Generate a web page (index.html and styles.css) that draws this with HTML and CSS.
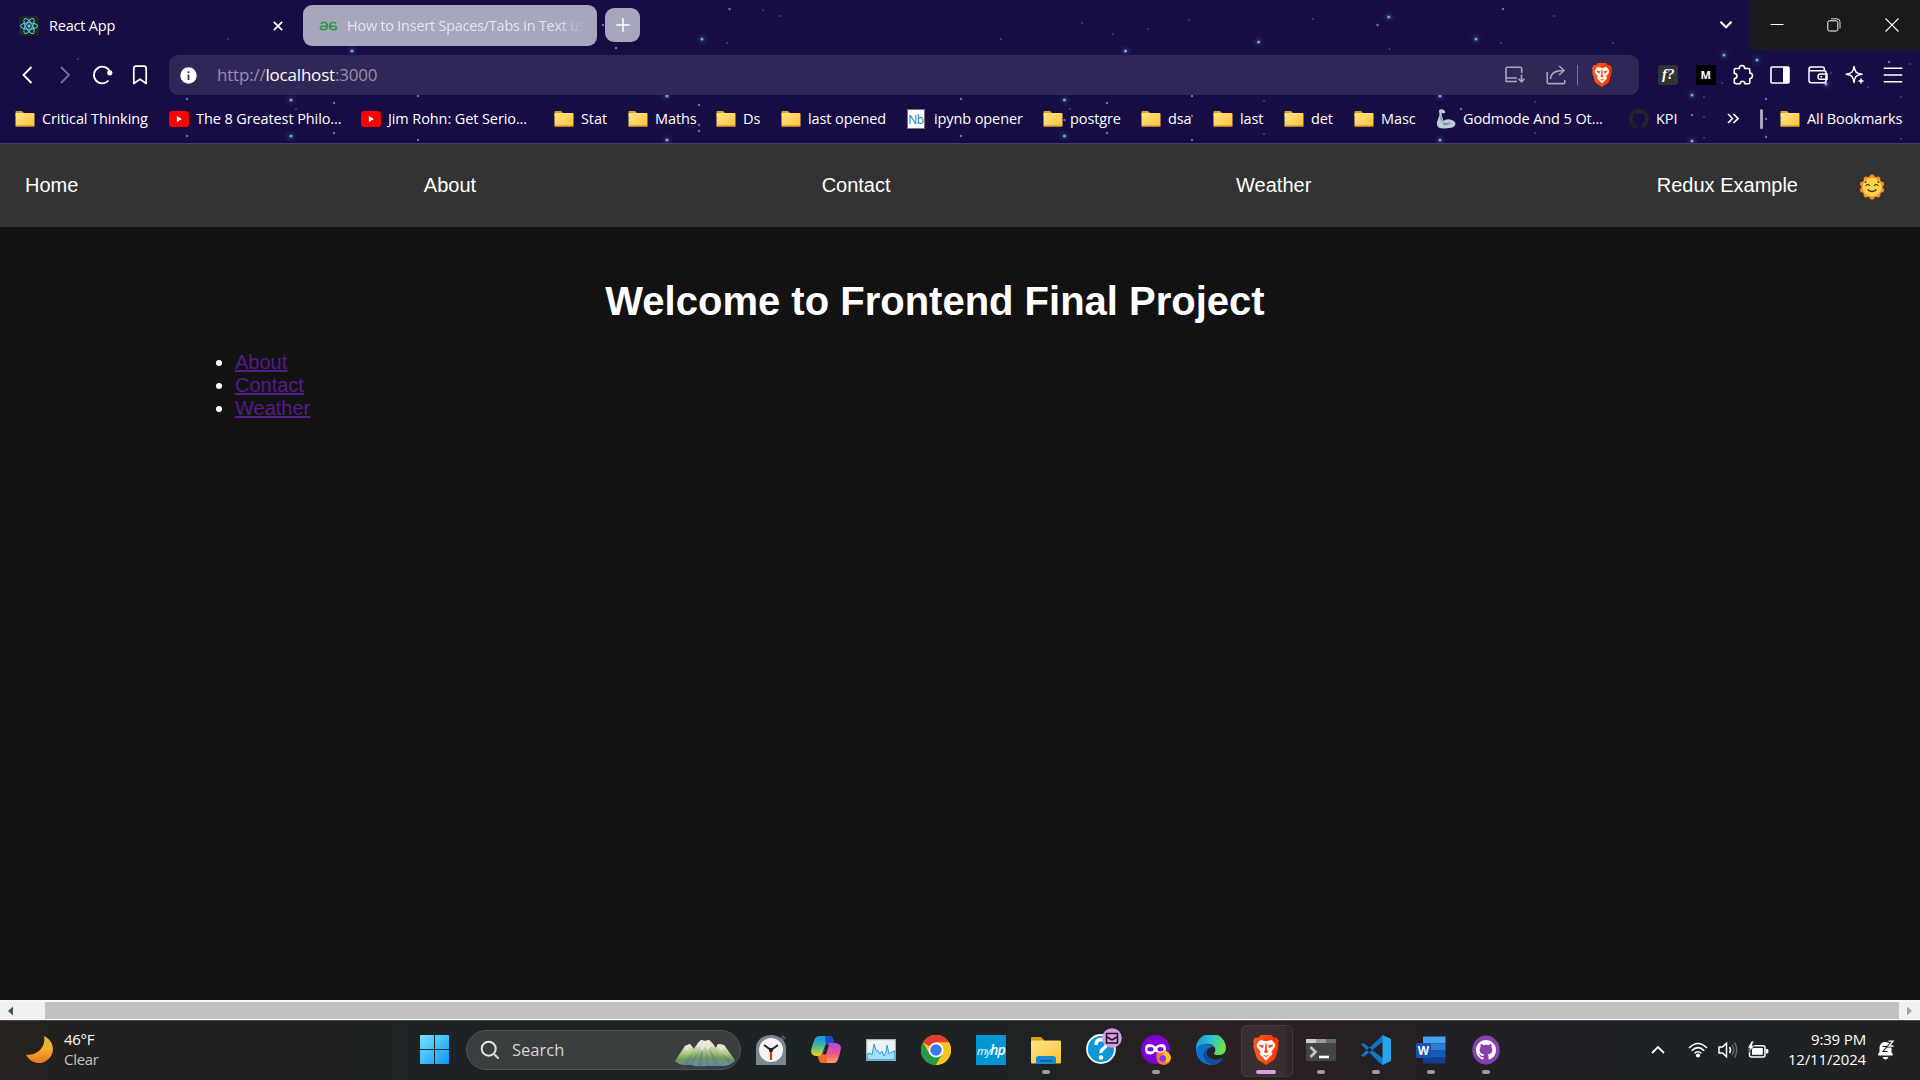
FILE: index.html
```html
<!DOCTYPE html>
<html lang="en">
<head>
<meta charset="utf-8">
<title>React App</title>
<link rel="stylesheet" href="styles.css">
</head>
<body>
<svg class="sprite" width="0" height="0">
  <defs>
    <linearGradient id="gFolder" x1="0" y1="0" x2="1" y2="1"><stop offset="0" stop-color="#ffe58c"/><stop offset="1" stop-color="#fbc234"/></linearGradient>
    <linearGradient id="gBrave" x1="0" y1="0" x2="1" y2="0"><stop offset="0" stop-color="#ff5a1f"/><stop offset="1" stop-color="#ff3000"/></linearGradient>
  </defs>
  <symbol id="folder" viewBox="0 0 20 18">
    <path d="M.5 2Q.5 1 1.500 1H7L9 3V6H.5Z" fill="#e0a21a"/>
    <rect x=".5" y="3" width="19" height="13.600" rx="1" fill="url(#gFolder)"/>
    <path d="M.5 16H19.500" stroke="#c98f1b" stroke-width="1"/>
  </symbol>
  <symbol id="youtube" viewBox="0 0 20 16">
    <rect x="0" y="0" width="20" height="16" rx="3.5" fill="#f00"/>
    <path d="M7.8 5V11L13 8Z" fill="#fff"/>
  </symbol>
  <symbol id="brave" viewBox="0 0 20 24">
    <path d="M6 0H14L16 2.2 18.2 2 20 5 19.3 7 19.8 9 17.3 18Q16.8 19.5 15.5 20.4L10 24 4.500 20.400Q3.200 19.500 2.700 18L.2 9 .7 7 0 5 1.800 2 4 2.200Z" fill="url(#gBrave)"/>
    <path d="M5.500 4L10 5 14.500 4 17.300 7.800 16.700 10 14.200 13.200 15 15.200 13.300 17 10 20.500 6.700 17 5 15.200 5.800 13.200 3.300 10 2.700 7.800Z" fill="#fff"/>
    <path d="M4.500 7.500L8.500 8.300 7.500 10.500 5.200 9.200ZM15.500 7.500L11.500 8.300 12.500 10.500 14.800 9.200ZM9.500 6.500H10.500L10.800 12 11.700 13.500 10 14.500 8.300 13.500 9.200 12ZM7 15.300L10 16.500 13 15.300 10 17.800Z" fill="#fb4a1a"/>
  </symbol>
  <symbol id="octocat" viewBox="0 0 16 16">
    <path d="M8 0C3.580 0 0 3.580 0 8c0 3.540 2.290 6.530 5.470 7.590.4.070.55-.17.55-.38 0-.19-.01-.82-.01-1.490-2.010.37-2.530-.49-2.690-.94-.09-.23-.48-.94-.82-1.130-.28-.15-.68-.52-.01-.53.63-.01 1.080.58 1.230.82.72 1.210 1.870.87 2.330.66.07-.52.28-.87.51-1.070-1.780-.2-3.640-.89-3.640-3.950 0-.87.31-1.590.82-2.150-.08-.2-.36-1.020.08-2.120 0 0 .67-.21 2.200.82.64-.18 1.320-.27 2-.27s1.360.09 2 .27c1.530-1.040 2.200-.82 2.200-.82.44 1.100.16 1.920.08 2.120.51.56.82 1.270.82 2.150 0 3.070-1.870 3.750-3.650 3.950.29.25.54.73.54 1.480 0 1.070-.01 1.930-.01 2.200 0 .21.15.46.55.38A8.010 8.010 0 0 0 16 8c0-4.420-3.580-8-8-8z" fill="currentColor"/>
  </symbol>
</svg>

<div class="screen">
<header class="browser">
  <svg class="stars" width="1920" height="143" id="stars"></svg>

  <div class="tabs">
    <div class="tab active">
      <svg width="20" height="20" viewBox="0 0 20 20"><rect width="20" height="20" rx="2.500" fill="#222526"/><g fill="none" stroke="#5cc6dc" stroke-width="1.100"><ellipse cx="10" cy="10" rx="8.500" ry="3.300"/><ellipse cx="10" cy="10" rx="8.500" ry="3.300" transform="rotate(60 10 10)"/><ellipse cx="10" cy="10" rx="8.500" ry="3.300" transform="rotate(120 10 10)"/></g><circle cx="10" cy="10" r="1.700" fill="#5cc6dc"/></svg>
      <span class="tab-title">React App</span>
      <svg class="tab-close" width="12" height="12" viewBox="0 0 12 12"><path d="M1.800 1.800L10.200 10.200M10.200 1.800L1.800 10.200" stroke="#fff" stroke-width="1.800"/></svg>
    </div>
    <div class="tab idle">
      <svg width="19" height="10" viewBox="0 0 19 12" preserveAspectRatio="none" fill="none" stroke="#2f9b4a" stroke-width="2"><path d="M9 6.300H1.200M2 3.500Q3 1.200 5.300 1.500 8.200 2 8.200 6T5 10.500Q2 10.800 1.300 7.500M10 6.300H17.800M17 3.500Q16 1.200 13.700 1.500 10.800 2 10.800 6T14 10.500Q17 10.800 17.700 7.500"/></svg>
      <span class="tab-title">How to Insert Spaces/Tabs in Text using</span>
    </div>
    <div class="new-tab"><svg width="14" height="14" viewBox="0 0 14 14"><path d="M7 .3V13.700M.3 7H13.700" stroke="#fff" stroke-width="1.500"/></svg></div>
    <svg class="tab-search" width="14" height="10" viewBox="0 0 14 10"><path d="M1.500 1.800L7 7.300 12.500 1.800" fill="none" stroke="#fff" stroke-width="2.200"/></svg>
    <div class="win-controls">
      <div><svg width="14" height="14" viewBox="0 0 14 14"><path d="M.5 6.500H13.500" stroke="#fff"/></svg></div>
      <div><svg width="14" height="14" viewBox="0 0 14 14" fill="none"><path d="M4 .8H10Q13 .8 13 3.800V10.500" stroke="#ddd"/><rect x=".8" y="2.800" width="10" height="10.200" rx="1.500" stroke="#fff"/></svg></div>
      <div><svg width="14" height="14" viewBox="0 0 14 14"><path d="M.5.5L13.500 13.500M13.500.5L.5 13.500" stroke="#fff" stroke-width="1.100"/></svg></div>
    </div>
  </div>

  <div class="toolbar">
    <div class="nav-icons">
      <svg width="38" height="24" viewBox="0 0 38 24"><path d="M23.500 4L15.500 12 23.500 20" fill="none" stroke="#fff" stroke-width="1.800"/></svg>
      <svg width="38" height="24" viewBox="0 0 38 24"><path d="M15 4L23 12 15 20" fill="none" stroke="#776f98" stroke-width="1.800"/></svg>
      <svg width="38" height="24" viewBox="0 0 38 24"><path d="M24.500 17.500A8.300 8.300 0 1 1 26 9" fill="none" stroke="#fff" stroke-width="1.800"/><circle cx="25.800" cy="9.800" r="2.600" fill="#fff"/></svg>
      <svg width="38" height="24" viewBox="0 0 38 24"><path d="M11.800 20.500V5.300Q11.800 3.200 14 3.200H22Q24.200 3.200 24.200 5.300V20.500L18 16.200Z" fill="none" stroke="#fff" stroke-width="1.700" stroke-linejoin="round"/></svg>
    </div>
    <div class="address">
      <svg width="17" height="17" viewBox="0 0 17 17"><circle cx="8.500" cy="8.500" r="8.200" fill="#fff"/><path d="M8.500 7.500V13M8.500 4.200V6" stroke="#312757" stroke-width="1.700"/></svg>
      <span class="url">http://<b>localhost</b>:3000</span>
      <div class="address-icons">
        <svg width="22" height="18" viewBox="0 0 22 18" fill="none" stroke="#aaa5bd" stroke-width="1.600"><path d="M13 15.500H1.500M2 12V2.500Q2 1.300 3.200 1.300H16.500Q17.700 1.300 17.700 2.500V7M2 12H13M2 12V15.500M17.500 8.500V15.500M14.500 12.800L17.500 15.800 20.500 12.800"/></svg>
        <svg width="20" height="20" viewBox="0 0 20 20" fill="none" stroke="#aaa5bd" stroke-width="1.600"><path d="M1.200 7V17.300Q1.200 18.600 2.500 18.600H17.500Q18.800 18.600 18.800 17.300V15M4.500 14Q5 5.500 17 5.500M13.200 1L18 5.500 13.200 10"/></svg>
        <i class="address-sep"></i>
        <svg width="20" height="24"><use href="#brave"/></svg>
      </div>
    </div>
    <div class="extensions">
      <div><span class="ext ext-f">f?</span></div>
      <div><span class="ext ext-m">M</span></div>
      <svg width="22" height="22" viewBox="0 0 22 22"><path d="M3.500 4.500H7.300Q7.300 1.500 10 1.500T12.700 4.500H16.500Q17.800 4.500 17.800 5.800V9Q20.500 9.300 20.500 11.800T17.800 14.700V18.300Q17.800 19.700 16.500 19.700H13Q12.500 17.300 10.500 17.300T8 19.700H4.500Q2.300 19.700 2.300 18.300V14.800Q5 14.300 5 12T2.300 9.300V5.800Q2.300 4.500 3.500 4.500Z" fill="none" stroke="#fff" stroke-width="1.600"/></svg>
      <svg width="20" height="18" viewBox="0 0 20 18"><rect x="1" y="1" width="18" height="16" rx="1" fill="none" stroke="#fff" stroke-width="1.600"/><path d="M13 1H19V17H13Z" fill="#fff"/></svg>
      <svg width="20" height="18" viewBox="0 0 20 18" fill="none" stroke="#fff" stroke-width="1.500"><path d="M1 3.500V14.500Q1 16.700 3.200 16.700H16Q18 16.700 18 14.700V6.500Q18 4.800 16 4.800H3Q1 4.800 1 3T3 1H14.500Q16.300 1 16.300 2.800V4.500M19 8H12.500Q10 8 10 10.700T12.500 13.300H19ZM12.500 10.700H14"/></svg>
      <svg width="20" height="20" viewBox="0 0 20 20" fill="none" stroke="#fff" stroke-width="1.500"><path d="M9 1.500Q9.800 5.500 11 7T17 9.300Q12.500 10 11 11.500T9 17.500Q8.300 13 7 11.500T1.200 9.300Q5.500 8.500 7 7T9 1.500Z" stroke-linejoin="round"/><path d="M16 12.500L17 15 19.500 16 17 17 16 19.500 15 17 12.500 16 15 15Z" fill="#fff" stroke="none"/></svg>
      <svg width="20" height="16" viewBox="0 0 20 16"><path d="M.7 1.200H19.300M.7 8H19.300M.7 14.800H19.300" stroke="#fff" stroke-width="1.500"/></svg>
    </div>
  </div>

  <div class="bookmarks">
    <div><svg width="20" height="18"><use href="#folder"/></svg><span>Critical Thinking</span></div>
    <div><svg width="20" height="16"><use href="#youtube"/></svg><span>The 8 Greatest Philo...</span></div>
    <div><svg width="20" height="16"><use href="#youtube"/></svg><span>Jim Rohn: Get Serio...</span></div>
    <div><svg width="20" height="18"><use href="#folder"/></svg><span>Stat</span></div>
    <div><svg width="20" height="18"><use href="#folder"/></svg><span>Maths</span></div>
    <div><svg width="20" height="18"><use href="#folder"/></svg><span>Ds</span></div>
    <div><svg width="20" height="18"><use href="#folder"/></svg><span>last opened</span></div>
    <div><span class="nb">Nb</span><span>ipynb opener</span></div>
    <div><svg width="20" height="18"><use href="#folder"/></svg><span>postgre</span></div>
    <div><svg width="20" height="18"><use href="#folder"/></svg><span>dsa</span></div>
    <div><svg width="20" height="18"><use href="#folder"/></svg><span>last</span></div>
    <div><svg width="20" height="18"><use href="#folder"/></svg><span>det</span></div>
    <div><svg width="20" height="18"><use href="#folder"/></svg><span>Masc</span></div>
    <div><svg width="20" height="20" viewBox="0 0 20 20"><path d="M3 1Q6-.5 8.500 1.500L9.500 3.500 7.500 4.500 5.500 3.800 6 7 7.500 12Q10 9.500 14 10.500 19.500 11.500 19.500 15 19 18.500 14 19 6 20 2.500 18.500.500 17 1 13L3.500 6Z" fill="#bccbd6"/><path d="M5.500 3.800Q5 8 6 12L8 16Q5 13 4 9ZM8 13Q11 15 15 13Q12 17 7 16Z" fill="#7d91a5"/></svg><span>Godmode And 5 Ot...</span></div>
    <div><svg class="gh" width="20" height="20"><use href="#octocat"/></svg><span>KPI</span></div>
    <div><svg width="12" height="11" viewBox="0 0 12 11"><path d="M1 1L5.500 5.500 1 10M6.500 1L11 5.500 6.500 10" fill="none" stroke="#fff" stroke-width="1.600"/></svg></div>
    <div><i class="bm-sep"></i></div>
    <div><svg width="20" height="18"><use href="#folder"/></svg><span>All Bookmarks</span></div>
  </div>
</header>

<nav class="site-nav">
  <div class="links"><a>Home</a><a>About</a><a>Contact</a><a>Weather</a><a>Redux Example</a></div>
  <svg width="26" height="26" viewBox="0 0 26 26"><g fill="#fb8a2c"><circle cx="13" cy="13" r="10.700"/><circle cx="13" cy="3" r="2.500"/><circle cx="18.900" cy="4.900" r="2.500"/><circle cx="22.500" cy="9.900" r="2.500"/><circle cx="22.500" cy="16.100" r="2.500"/><circle cx="18.900" cy="21.100" r="2.500"/><circle cx="13" cy="23" r="2.500"/><circle cx="7.100" cy="21.100" r="2.500"/><circle cx="3.500" cy="16.100" r="2.500"/><circle cx="3.500" cy="9.900" r="2.500"/><circle cx="7.100" cy="4.900" r="2.500"/></g><circle cx="13" cy="13" r="9.600" fill="#ffd545"/><path d="M6.700 11.800Q8.700 8.800 10.700 11.800M15.300 11.800Q17.300 8.800 19.300 11.800M8.500 15.500Q13 19.500 17.500 15.500M5.800 8.700L7.500 7.200M18.500 7.200L20.200 8.700" fill="none" stroke="#4a3040" stroke-width="1.200"/></svg>
</nav>

<main class="page">
  <h1>Welcome to Frontend Final Project</h1>
  <ul><li><a href="#">About</a></li><li><a href="#">Contact</a></li><li><a href="#">Weather</a></li></ul>
</main>

<div class="scrollbar">
  <svg width="45" height="18" viewBox="0 0 45 18"><path d="M13 4.500V13.500L8 9Z" fill="#505050"/></svg>
  <div class="thumb"></div>
  <svg width="21" height="18" viewBox="0 0 21 18"><path d="M8 4.500V13.500L13 9Z" fill="#a3a3a3"/></svg>
</div>

<footer class="taskbar">
  <div class="weather">
    <svg width="28" height="28" viewBox="0 0 28 28"><defs><linearGradient id="gMoon" x1="0" y1="0" x2="0" y2="1"><stop offset="0" stop-color="#d8b047"/><stop offset=".45" stop-color="#f3b12e"/><stop offset="1" stop-color="#ee7320"/></linearGradient></defs><path d="M18 0A14 14 0 1 1 0 18.500 15.500 15.500 0 0 0 18 0Z" fill="url(#gMoon)"/></svg>
    <div><p>46°F</p><p class="dim">Clear</p></div>
  </div>
  <svg class="start" width="29" height="29" viewBox="0 0 29 29"><defs><linearGradient id="gWin" x1="0" y1="0" x2="1" y2="1"><stop offset="0" stop-color="#7adcff"/><stop offset=".5" stop-color="#3fc0fb"/><stop offset="1" stop-color="#0a96fb"/></linearGradient></defs><path d="M1 0H14V14H0V1Q0 0 1 0ZM15 0H28Q29 0 29 1V14H15ZM0 15H14V29H1Q0 29 0 28ZM15 15H29V28Q29 29 28 29H15Z" fill="url(#gWin)"/></svg>
  <div class="search">
    <svg width="20" height="20" viewBox="0 0 20 20"><circle cx="8.700" cy="8.700" r="7" fill="none" stroke="#e4e4e4" stroke-width="2"/><path d="M13.500 13.500L18 18" stroke="#ccc" stroke-width="2.400" stroke-linecap="round"/></svg>
    <span>Search</span>
    <svg class="hills" width="60" height="28" viewBox="0 0 60 28"><defs><linearGradient id="gHill" x1="0" y1="0" x2="0" y2="1"><stop offset="0" stop-color="#e9e6dc"/><stop offset=".4" stop-color="#b5cc8e"/><stop offset=".7" stop-color="#6f9c4d"/><stop offset="1" stop-color="#658cb0"/></linearGradient></defs><path d="M0 22L10 7 15 5 22 14V25Q10 27 4 25ZM38 14L43 5 49 6 60 21Q58 25 50 27H38Z" fill="url(#gHill)"/><path d="M8 24L23 4 26 1 30 2 34 1 38 5 52 24Q40 28 20 27Z" fill="url(#gHill)"/><path d="M28 7L22 27H27ZM34 9L40 27H45ZM17 16L8 25 14 26ZM46 14L54 25 57 22ZM24 12L14 26H18ZM31 12L31 27H35Z" fill="#587aa0" opacity=".6"/><path d="M23 4L26 1 30 2 34 1 38 5 40 9 36 7 33 11 30 7 27 12 25 7 21 10Z" fill="#eee5e2"/><path d="M10 7L15 5 18 9 14 9 12 12 10 9 7 12ZM43 5L49 6 53 12 49 9 46 12 44 8 41 10Z" fill="#dfe6d0"/></svg>
  </div>
  <div class="apps">
    <div><svg width="30" height="30" viewBox="0 0 30 30"><path d="M24 3L27 0 30 3 27 6Z" fill="#4e4f52"/><path d="M0 30V13A15 13 0 0 1 30 13V30Z" fill="#7b8793"/><circle cx="15" cy="15" r="12" fill="#f4f4f4"/><path d="M8 10L15 15 22 10" fill="none" stroke="#222" stroke-width="2"/><path d="M15 15V25" stroke="#d83b01" stroke-width="2.200"/><circle cx="15" cy="15" r="2.200" fill="#222"/></svg></div>
    <div><svg width="30" height="28" viewBox="0 0 30 28"><defs><linearGradient id="gC1" x1="0" y1="0" x2="0" y2="1"><stop offset="0" stop-color="#1696e8"/><stop offset=".45" stop-color="#38b8a0"/><stop offset="1" stop-color="#fbd40c"/></linearGradient><linearGradient id="gC2" x1="0" y1="0" x2="0" y2="1"><stop offset="0" stop-color="#a94be8"/><stop offset=".5" stop-color="#ee4f91"/><stop offset="1" stop-color="#ffa052"/></linearGradient></defs><path d="M8 0H19Q21 0 22 3L23 7H17Q15 7 14 10L11 18Q10 21 6 20Q0 20 0 15Q1 9 3.500 3.500 5 0 8 0Z" fill="url(#gC1)"/><path d="M14 0H18.500Q21 0 22 3.500L23 7H17Q15.500 7 15 8.500Z" fill="#1748cf"/><path d="M23 27H11Q9 27 8 24L7 20Q11 20 12.500 16L16 8.500Q17 6 22 7H25Q30 8 30 12 29 18 27 23 26 27 23 27Z" fill="url(#gC2)"/><path d="M16 27H11Q9 27 8 23.500L7 20H12.500Q14 20 15 17Z" fill="#f4692a"/><path d="M15.500 8.500H18L15 18.500H12Z" fill="#1d2223"/></svg></div>
    <div><svg width="30" height="22" viewBox="0 0 30 22"><rect width="30" height="22" fill="#a9b5bd"/><rect x="1.200" y="1.200" width="27.600" height="19.600" fill="#eef3f6"/><path d="M1.200 15L4 14 6 16 8 5 10 11 12 12 14 15 16 12 18 17 20 13 21 6 23 15 26 13 28.800 12V20.800H1.200Z" fill="#a5dcf8" stroke="#2b9ddb"/></svg></div>
    <div><svg width="30" height="30" viewBox="0 0 30 30"><circle cx="15" cy="15" r="15" fill="#fcc31e"/><path d="M15 15L2 7.500A15 15 0 0 1 28 7.500H15Z" fill="#e33b2e"/><path d="M2 7.500A15 15 0 0 0 15 30L21.500 18.700 15 15 8.500 18.700Z" fill="#249a49"/><path d="M15 7.500H28A15 15 0 0 1 15 30L21.500 18.700Z" fill="#fcc31e"/><circle cx="15" cy="15" r="7.500" fill="#fff"/><circle cx="15" cy="15" r="5.800" fill="#3b78e7"/></svg></div>
    <div><span class="myhp">my<b>hp</b></span></div>
    <div class="open"><svg width="30" height="28" viewBox="0 0 30 28"><path d="M0 2Q0 1 1 1H10L13 4V9H0Z" fill="#dc9b0b"/><rect y="4.500" width="30" height="23" rx="1" fill="url(#gFolder)"/><path d="M5 28V23Q5 20 8 20H22Q25 20 25 23V28Z" fill="#1789d3"/><rect x="9" y="24" width="12" height="1.500" fill="#0b5a9e"/></svg></div>
    <div><svg width="38" height="36" viewBox="0 0 38 36"><circle cx="16" cy="21" r="14" fill="#0f96d6" stroke="#f0f8fb" stroke-width="1.800"/><path d="M11 17Q11 11.500 16 11.500T21.500 16Q21.500 18.500 18.500 20.500T16 25" fill="none" stroke="#fff" stroke-width="3.400"/><circle cx="16" cy="29.500" r="2.300" fill="#fff"/><circle cx="27" cy="10" r="9.800" fill="#d99de5"/><g fill="none" stroke="#1b1220" stroke-width="1.500"><rect x="21.500" y="5.500" width="11" height="9.500"/><path d="M22 9L27 12 32 9"/></g></svg></div>
    <div class="open"><svg width="30" height="30" viewBox="0 0 30 30"><ellipse cx="14.500" cy="14.500" rx="14.500" ry="14.500" fill="#8000d7"/><path d="M4 14Q4 9 8.500 9 12 9 14.500 11.500 17 9 20.500 9 25 9 25 14T20 19.500Q17 19.500 14.500 16.500 12 19.500 9 19.500 4 19.500 4 14Z" fill="#fff"/><ellipse cx="9.500" cy="14.200" rx="3" ry="2.200" fill="#8000d7"/><ellipse cx="19.500" cy="14.200" rx="3" ry="2.200" fill="#8000d7"/><path d="M16 17Q22 19 24 15 30 18 30 23.500 29 30 22.500 30 16 29 15.500 23 15 20 16 17Z" fill="#ff7139"/><path d="M24 15Q29 18 30 23 28 28 24 27 27 23 22 20Z" fill="#ffc12e"/><circle cx="21.800" cy="23.500" r="3.200" fill="#7542e5"/></svg></div>
    <div><svg width="30" height="30" viewBox="0 0 30 30"><defs><linearGradient id="gE" x1="0" y1="0" x2="1" y2=".3"><stop offset="0" stop-color="#1b8de0"/><stop offset=".55" stop-color="#2bc3d2"/><stop offset="1" stop-color="#6be04a"/></linearGradient></defs><path d="M0 14A15 15 0 0 1 30 13Q30 19.500 23 20 18 20 18 18.500 20 16 19 13 16 7.500 8 9 1 11 0 16Z" fill="url(#gE)"/><path d="M0 15Q2 9 9.500 9 15 9 17.500 12 12 11.500 10.500 17 10 25 20 29 17 30 15 30A15 15 0 0 1 0 15Z" fill="#0c70cf"/><path d="M12 13Q9 17 12 21.500 18 27 27.500 22.500 24 30 16 30 8 27 7.500 20 8 14.500 12 13Z" fill="#124c98"/></svg></div>
    <div class="current"><svg width="26" height="30" viewBox="0 0 20 24" preserveAspectRatio="none"><use href="#brave" width="20" height="24"/></svg></div>
    <div class="open"><svg width="30" height="22" viewBox="0 0 30 22"><rect width="30" height="22" rx="1" fill="#434547"/><path d="M0 0H10V4H0Z" fill="#ccc"/><path d="M10 0H20V4H10Z" fill="#999"/><path d="M20 0H30V4H20Z" fill="#6c6c6c"/><path d="M4.500 8L9.500 13 4.500 18" fill="none" stroke="#c9c9c9" stroke-width="2.600"/><path d="M13 18H23" stroke="#fff" stroke-width="2.600"/></svg></div>
    <div class="open"><svg width="30" height="30" viewBox="0 0 30 30"><path d="M0 9.500L2.500 8 22 23.500V30L20 29ZM0 20.500L2.500 22 22 6.500V0Z" fill="#0d78c4"/><path d="M21.500 0L30 4V26L21.500 30Z" fill="#2aa3ee"/></svg></div>
    <div class="open"><svg width="30" height="28" viewBox="0 0 30 28"><path d="M7 1Q7 .5 8 .5H29.500V7.500H7Z" fill="#41a5ee"/><path d="M7 7.500H29.500V14.500H7Z" fill="#2b7cd3"/><path d="M7 14.500H29.500V21H7Z" fill="#185abd"/><path d="M7 21H29.500V27.500H7Z" fill="#103f91"/><rect y="7" width="15" height="15" rx="1" fill="#1a50b0"/><text x="7.500" y="18.800" class="word-w">W</text></svg></div>
    <div class="open"><svg width="28" height="30" viewBox="0 0 28 30"><ellipse cx="14" cy="15" rx="13.700" ry="14.500" fill="#8a3fae"/><g color="#fff" transform="translate(4 5)"><use href="#octocat" width="20" height="20"/></g></svg></div>
  </div>
  <div class="tray">
    <svg width="14" height="10" viewBox="0 0 14 10"><path d="M1 8L7 2 13 8" fill="none" stroke="#fff" stroke-width="1.800"/></svg>
    <svg class="wifi" width="20" height="16" viewBox="0 0 20 16" fill="none" stroke="#fff" stroke-width="1.500"><path d="M1 6Q10-3 19 6M3.700 8.700Q10 2.500 16.300 8.700M6.500 11.400Q10 8 13.500 11.400"/><circle cx="10" cy="13.500" r="1.300" fill="#fff"/></svg>
    <svg class="speaker" width="20" height="18" viewBox="0 0 20 18" fill="none" stroke="#fff" stroke-width="1.500"><path d="M1 6H4.500L8.500 2.200V15.800L4.500 12H1ZM11.500 6Q13.500 9 11.500 12"/><path d="M14 3.800Q17.500 9 14 14.200M16.500 1.500Q21 9 16.500 16.500" stroke="#666a6e"/></svg>
    <svg class="battery" width="21" height="18" viewBox="0 0 21 18"><rect x="1.500" y="4.700" width="15.500" height="11.300" rx="2" fill="none" stroke="#fff" stroke-width="1.500"/><rect x="4" y="7" width="10.800" height="6.800" fill="#fff"/><path d="M18 8H19.300Q20.500 8 20.500 10.300T19.300 12.500H18Z" fill="#fff"/><path d="M3.500 0L-.5 7H2L.8 11.500 6.500 4.700H4L6 0Z" fill="#fff" stroke="#1f2226" stroke-width=".7"/></svg>
    <div class="clock"><p>9:39 PM</p><p>12/11/2024</p></div>
    <svg class="bell" width="18" height="20" viewBox="0 0 18 20"><path d="M1 14.500L2.500 12V7.500Q3 2 8.500 2 14.500 2.500 14.500 8V12L16 14.500Q16 15.500 15 15.500H2Q1 15.500 1 14.500ZM5.500 17H11.500Q10.500 19.500 8.500 19.500T5.500 17Z" fill="#fff"/><path d="M11.500 1.200H16L12 6H16.500" fill="none" stroke="#1f2223" stroke-width="3"/><path d="M11.500 1.200H16L12 6H16.500" fill="none" stroke="#fff" stroke-width="1.300"/><path d="M5.500 6.500H10L6 11.500H10.500" fill="none" stroke="#1f2223" stroke-width="1.200"/></svg>
  </div>
</footer>
</div>
<script src="stars.js"></script>
</body>
</html>
```
FILE: styles.css
```css
* { box-sizing: border-box; }
body { margin: 0; background: #121212; font-family: "Open Sans", "Noto Sans", sans-serif; color: #fff; overflow: hidden; }
svg { display: block; flex: none; }
p { margin: 0; }
.sprite { position: absolute; }
.screen { width: 1920px; height: 1080px; display: flex; flex-direction: column; }

.browser { position: relative; height: 144px; background: #170c44; border-bottom: 1px solid #443b78; }
.stars { position: absolute; left: 0; top: 0; }
.tabs, .toolbar, .bookmarks { position: relative; display: flex; align-items: center; }
.tabs { height: 50px; align-items: flex-start; font-size: 14.5px; letter-spacing: -.2px; }
.tab { display: flex; align-items: center; height: 41px; margin-top: 5px; }
.active { width: 303px; padding: 0 19px 0 19px; }
.active .tab-title { flex: 1; margin-left: 10px; }
.idle { width: 294px; padding: 0 11px 0 16px; background: #a6a7bd; border-radius: 9px; color: #e6e6ee; }
.idle .tab-title { margin-left: 9px; letter-spacing: -.25px; white-space: nowrap; overflow: hidden; -webkit-mask-image: linear-gradient(90deg, #000 88%, transparent); mask-image: linear-gradient(90deg, #000 88%, transparent); }
.new-tab { width: 35px; height: 34px; margin: 8px 0 0 8px; border-radius: 9px; background: #a6a7bd; display: grid; place-items: center; }
.tab-search { margin: 20px 16px 0 auto; }
.win-controls { display: flex; gap: 1px; height: 50px; }
.win-controls div { width: 56.5px; background: #1a191b; display: grid; place-items: center; }

.toolbar { height: 50px; }
.nav-icons { display: flex; width: 169px; padding-left: 8px; }
.address { width: 1470px; height: 40px; padding: 0 27px 0 11px; border-radius: 9px; background: #312757; display: flex; align-items: center; }
.url { margin: -2px 0 0 20px; font-size: 17px; letter-spacing: -.2px; color: #958fad; }
.url b { font-weight: 400; color: #fff; }
.address-icons { display: flex; align-items: center; margin-left: auto; }
.address-icons svg:nth-child(2) { margin-left: 20px; }
.address-sep { width: 1px; height: 20px; margin: 0 14px 0 11px; background: #7b7498; }
.extensions { display: grid; grid-template-columns: repeat(7, 37.4px); justify-items: center; align-items: center; margin-left: 10.500px; }
.ext { display: block; width: 20px; height: 20px; line-height: 20px; text-align: center; font-weight: 700; }
.ext-f { background: #333; border-radius: 3px; font: italic 700 15px/19px "Liberation Serif", serif; }
.ext-m { background: #000; font-size: 11px; }

.bookmarks { display: grid; height: 37px; padding-left: 15px; grid-template-columns: 154px 192px 193px 74px 88px 65px 126px 136px 98px 72px 71px 70px 82px 193px 97.500px 33.500px 20px 140px; font-size: 14.5px; letter-spacing: -.1px; white-space: nowrap; }
.bookmarks div { display: flex; align-items: center; gap: 7px; }
.nb { width: 18px; height: 20px; background: #fff; border: 1px solid #777; color: #2878ad; font-size: 12px; line-height: 19px; text-align: center; letter-spacing: -.5px; margin-right: 2px; }
.gh { color: #22262a; }
.bm-sep { width: 3px; height: 20px; background: #a6a7bd; border-radius: 2px; }

.site-nav { height: 83px; background: #333; display: flex; align-items: center; padding: 0 35px 0 25px; font: 20px/23px "Liberation Sans", Arial, sans-serif; }
.links { display: flex; justify-content: space-between; width: 1773px; }
.site-nav svg { margin: 3px 0 0 auto; }
.page { flex: 1; padding: 51px 195px 0; font: 20px/23px "Liberation Sans", Arial, sans-serif; }
.page h1 { margin: 0 0 27px; font-size: 40px; line-height: 46px; text-align: center; width: 1480px; }
.page ul { margin: 0; padding-left: 40px; }
.page a { color: #551a8b; }

.scrollbar { height: 20px; border-top: 2px solid #f8f6f8; border-bottom: 1px solid #fff; background: #f1f1f1; display: flex; align-items: center; }
.thumb { flex: 1; align-self: stretch; background: #c1c1c1; }

.taskbar { height: 60px; padding-bottom: 2px; border-top: 1px solid #48484a; display: flex; align-items: center; background: linear-gradient(90deg, #28211d 0, #22211f 60px, #22211f 300px, #1d2324 420px, #1d2324 1000px, #2c2021 1260px, #242024 1400px, #1f2026 1560px, #1d2226 1750px, #22211f 1920px); font-size: 15px; line-height: 20px; }
.weather { width: 394px; padding-left: 26px; display: flex; align-items: center; gap: 10px; letter-spacing: -.3px; }
.weather div, .clock { margin-top: -2px; }
.dim { color: #c4c4c4; }
.start { margin-left: 26px; }
.search { width: 275px; height: 40px; margin: 1px 0 0 17px; padding: 0 5px 0 13px; border-radius: 20px; background: #3b3e3f; border: 1px solid #505354; display: flex; align-items: center; font-size: 16.5px; color: #d5d5d5; }
.search span { flex: 1; margin-left: 12px; }
.hills { margin-top: 6px; }
.apps { display: grid; grid-template-columns: repeat(14, 55px); height: 57px; margin-left: 2.500px; }
.apps div { position: relative; display: grid; place-items: center; }
.apps div:nth-child(7) svg { margin: -7px 0 0 6px; }
.open::after, .current::after { content: ""; position: absolute; left: 23.500px; top: 49px; width: 8px; height: 4px; border-radius: 2px; background: #9b9b9d; }
.current::after { left: 17.500px; width: 20px; background: #dc9ee8; }
.current::before { content: ""; position: absolute; left: 2.500px; top: 4px; width: 50px; height: 50px; border-radius: 5px; border: 1px solid #453b3c; background: #382e2f; box-shadow: inset -5px 0 #302728; }
.current svg { position: relative; }
.myhp { width: 30px; height: 30px; background: #0096d6; font: italic 11px/30px "Open Sans", sans-serif; letter-spacing: -.8px; text-align: center; }
.myhp b { font-size: 14px; font-weight: 600; }
.word-w { fill: #fff; font: 700 12px "Liberation Sans", sans-serif; text-anchor: middle; }
.tray { flex: 1; display: flex; align-items: center; justify-content: flex-end; padding-right: 25px; }
.wifi { margin-left: 23px; }
.speaker { margin-left: 10px; }
.battery { margin-left: 10px; }
.clock { width: 97px; text-align: right; letter-spacing: -.15px; }
.bell { margin-left: 11px; }
```
FILE: stars.js
```js
// Star field of the browser theme: x, y and brightness (1 faint, 2 normal, 3 glowing)
var stars = [[352,39,2],[352,51,3],[228,39,1],[78,59,1],[187,99,2],[291,100,3],[334,103,2],[418,96,2],[187,136,2],[291,136,3],[334,133,2],[418,140,2],[296,109,1],[616,48,2],[603,25,2],[729.5,9,2],[763,10,1],[780,16,1],[702,39,3],[727,43,1],[667,96,3],[699,105,2],[961,99,2],[1064.5,100,3],[1107,103,2],[1192,96,2],[1264,101,1],[699,125,2],[699,131,2],[667,140,3],[961,136,2],[1064.5,136,3],[1064.5,120,2],[1107,133,2],[1192,140,2],[1192,116,2],[1070,109,1],[1001,39,1],[1125.5,51,3],[1082,23,1],[1113,34,1],[1148,29,1],[1189,20,1],[1258.6,42,3],[1264,134,1],[1388.8,17,3],[1377.5,25,2],[1389.5,49,1],[1313,19,1],[1503,9,2],[1554,16,1],[1476,39,3],[1501,43,1],[1613,43,1],[1724,55,3],[1757,60,3],[1722,83,1],[1889,62,2],[1910,64,1],[1826,84,3],[1868,87,1],[1440,96,3],[1692,95,3],[1704,97,1],[1766,99,2],[1535,102,1],[1901,97,1],[1692,115,2],[1704,117,1],[1766,119,2],[1461,109,2],[1440,140,3],[1535,133,1],[1692,141,3],[1704,138,1],[1766,137,2],[1901,139,1],[1831,73,1]];
var sky = document.getElementById("stars");
function dot(x, y, r, fill, opacity) {
  var c = document.createElementNS("http://www.w3.org/2000/svg", "circle");
  c.setAttribute("cx", x); c.setAttribute("cy", y); c.setAttribute("r", r);
  c.setAttribute("fill", fill); c.setAttribute("opacity", opacity);
  sky.appendChild(c);
}
stars.forEach(function (s) {
  if (s[2] === 3) { dot(s[0], s[1], 6, "#1d4a8c", .14); dot(s[0], s[1], 3.5, "#2a5a9c", .22); }
  dot(s[0], s[1], [0, .9, 1.2, 1.6][s[2]], "#a4a9d2", [0, .4, .65, .9][s[2]]);
});
```
